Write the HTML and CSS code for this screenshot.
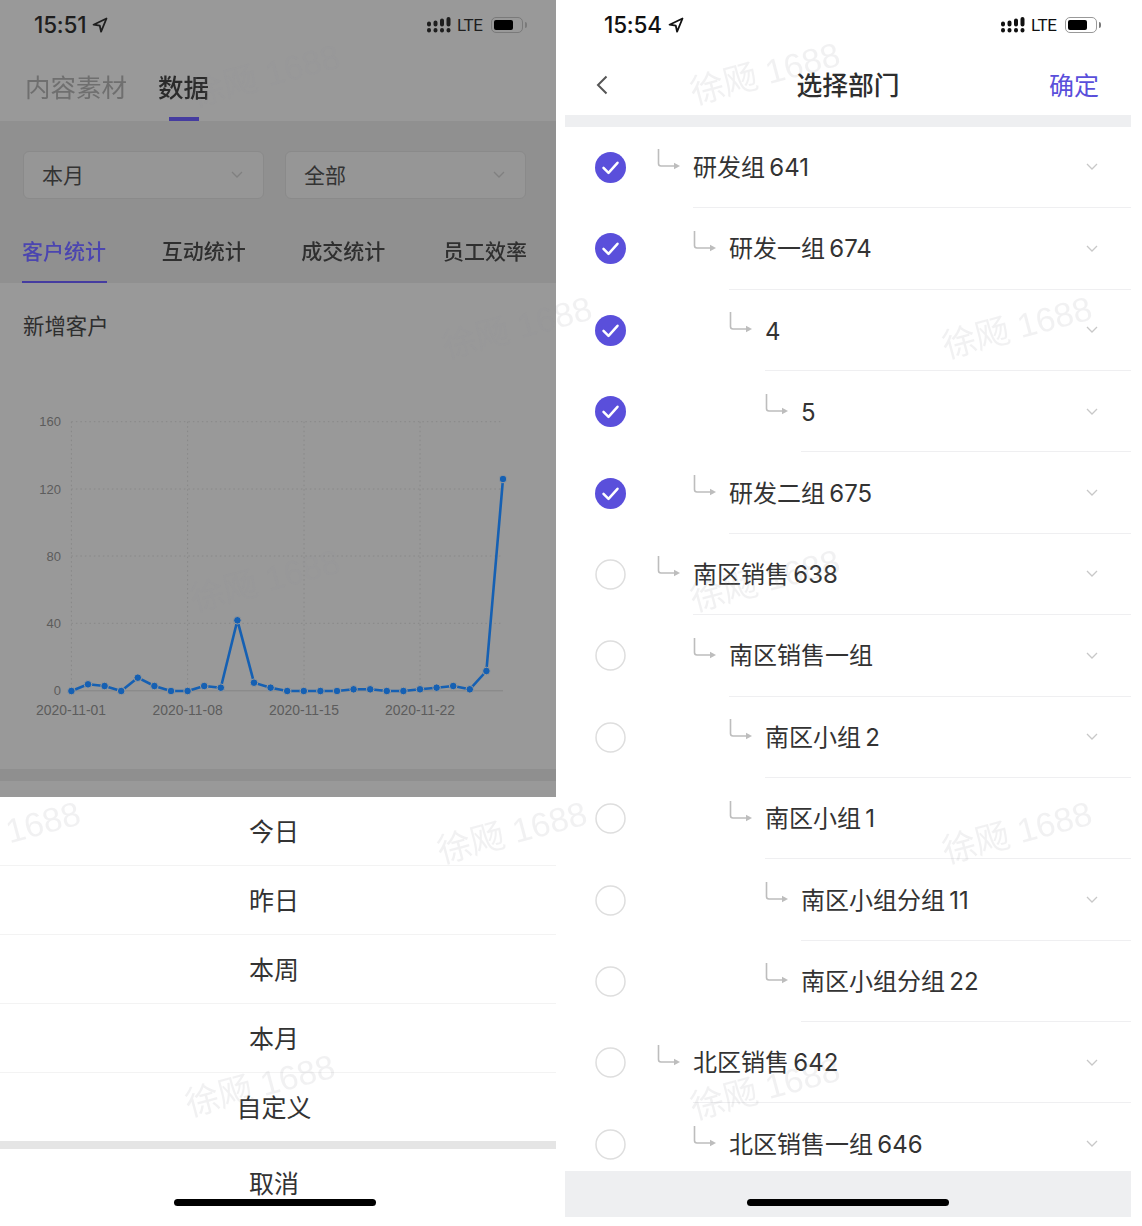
FILE: index.html
```html
<!DOCTYPE html>
<html lang="zh-CN">
<head>
<meta charset="utf-8">
<title>数据 / 选择部门</title>
<link rel="stylesheet" href="styles.css">
</head>
<body>
<svg class="defs" width="0" height="0" aria-hidden="true">
  <symbol id="elbow" viewBox="0 0 24 22">
    <path d="M1.500 1v14.500q0 2.500 2.500 2.500h14" fill="none" stroke="currentColor" stroke-width="1.600"/>
    <path d="M17 14.800l6 3.200-6 3.200z" fill="currentColor"/>
  </symbol>
  <symbol id="chev" viewBox="0 0 12 8">
    <path d="M1 1l5 5 5-5" fill="none" stroke="currentColor" stroke-width="1.300"/>
  </symbol>
  <symbol id="check" viewBox="0 0 31 31">
    <circle cx="15.500" cy="15.500" r="15.500" fill="#5a4fdb"/>
    <path d="M8.500 15.800l5 5 9-10" fill="none" stroke="#fff" stroke-width="2.500" stroke-linecap="round" stroke-linejoin="round"/>
  </symbol>
  <symbol id="radio" viewBox="0 0 31 31">
    <circle cx="15.500" cy="15.500" r="14.500" fill="none" stroke="#dedede" stroke-width="1.500"/>
  </symbol>
  <symbol id="arrow" viewBox="0 0 16 16">
    <path d="M14.500 1.500L1.500 7.700l6.300 1 1.300 6z" fill="none" stroke="currentColor" stroke-width="1.800" stroke-linejoin="round"/>
  </symbol>
  <symbol id="signal" viewBox="0 0 24 16">
    <path d="M2 6.500v1M8.500 5.500v2M15 3.500v4M21.500 2v5.500M2 13v.5M8.500 13v.5M15 13v.5M21.500 13v.5" fill="none" stroke="currentColor" stroke-width="4" stroke-linecap="round"/>
  </symbol>
</svg>

<main class="page">
  <section class="phone phone-left">
    <header class="status">
      <div class="time">15:51<svg class="loc"><use href="#arrow"/></svg></div>
      <div class="sys">
        <svg class="sig"><use href="#signal"/></svg>
        <span class="lte">LTE</span>
        <span class="batt"><span class="batt-fill"></span></span>
      </div>
    </header>
    <nav class="main-tabs">
      <span class="main-tab">内容素材</span>
      <span class="main-tab main-tab-on">数据</span>
    </nav>
    <div class="band">
      <div class="filters">
        <div class="select"><span>本月</span><svg class="sel-chev"><use href="#chev"/></svg></div>
        <div class="select"><span>全部</span><svg class="sel-chev"><use href="#chev"/></svg></div>
      </div>
      <div class="sub-tabs">
        <span class="sub-tab sub-tab-on">客户统计</span>
        <span class="sub-tab">互动统计</span>
        <span class="sub-tab">成交统计</span>
        <span class="sub-tab">员工效率</span>
      </div>
    </div>
    <div class="stats">
      <h2 class="stats-title">新增客户</h2>
      <svg class="chart" viewBox="0 400 556 330">
        <g class="grid">
          <path d="M71.400 421.700H503M71.400 489H503M71.400 556H503M71.400 623.300H503"/>
          <path d="M71.400 421.700V691M187.600 421.700V691M304 421.700V691M420 421.700V691"/>
        </g>
        <path class="base" d="M71.400 690.800H503"/>
        <g class="ylab">
          <text x="61" y="426">160</text>
          <text x="61" y="493.500">120</text>
          <text x="61" y="560.500">80</text>
          <text x="61" y="627.500">40</text>
          <text x="61" y="695">0</text>
        </g>
        <g class="xlab">
          <text x="71" y="715">2020-11-01</text>
          <text x="187.600" y="715">2020-11-08</text>
          <text x="304" y="715">2020-11-15</text>
          <text x="420" y="715">2020-11-22</text>
        </g>
        <polyline class="line" points="71.400,691 88,684.300 104.600,686 121.200,691 137.800,677.700 154.400,686 171,691 187.600,691 204.200,686 220.800,687.700 237.400,620.300 254,682.700 270.600,687.700 287.200,691 303.800,691 320.400,691 337,691 353.600,689.300 370.200,689.300 386.800,691 403.400,691 420,689.300 436.600,687.700 453.200,686 469.800,689.300 486.400,671 503,479"/>
        <g class="dots">
          <circle cx="71.400" cy="691"/><circle cx="88" cy="684.300"/><circle cx="104.600" cy="686"/>
          <circle cx="121.200" cy="691"/><circle cx="137.800" cy="677.700"/><circle cx="154.400" cy="686"/>
          <circle cx="171" cy="691"/><circle cx="187.600" cy="691"/><circle cx="204.200" cy="686"/>
          <circle cx="220.800" cy="687.700"/><circle cx="237.400" cy="620.300"/><circle cx="254" cy="682.700"/>
          <circle cx="270.600" cy="687.700"/><circle cx="287.200" cy="691"/><circle cx="303.800" cy="691"/>
          <circle cx="320.400" cy="691"/><circle cx="337" cy="691"/><circle cx="353.600" cy="689.300"/>
          <circle cx="370.200" cy="689.300"/><circle cx="386.800" cy="691"/><circle cx="403.400" cy="691"/>
          <circle cx="420" cy="689.300"/><circle cx="436.600" cy="687.700"/><circle cx="453.200" cy="686"/>
          <circle cx="469.800" cy="689.300"/><circle cx="486.400" cy="671"/><circle cx="503" cy="479"/>
        </g>
      </svg>
    </div>
    <div class="stats-band"></div>
    <div class="stats-gap"></div>
    <div class="sheet">
      <div class="sheet-item">今日</div>
      <div class="sheet-item">昨日</div>
      <div class="sheet-item">本周</div>
      <div class="sheet-item">本月</div>
      <div class="sheet-item">自定义</div>
      <div class="sheet-cancel">取消</div>
      <div class="home home-left"></div>
    </div>
  </section>

  <section class="phone phone-right">
    <header class="status status-right">
      <div class="time">15:54<svg class="loc"><use href="#arrow"/></svg></div>
      <div class="sys">
        <svg class="sig"><use href="#signal"/></svg>
        <span class="lte">LTE</span>
        <span class="batt"><span class="batt-fill"></span></span>
      </div>
    </header>
    <nav class="navbar">
      <svg class="back" viewBox="0 0 12 20"><path d="M10.500 1.500L2 10l8.500 8.500" fill="none" stroke="currentColor" stroke-width="2"/></svg>
      <h1 class="nav-title">选择部门</h1>
      <span class="nav-ok">确定</span>
    </nav>
    <div class="divider"></div>
    <div class="list">
      <div class="row l0"><svg class="tick"><use href="#check"/></svg><svg class="elbow"><use href="#elbow"/></svg><div class="row-main"><span>研发组 641</span><svg class="row-chev"><use href="#chev"/></svg></div></div>
      <div class="row l1"><svg class="tick"><use href="#check"/></svg><svg class="elbow"><use href="#elbow"/></svg><div class="row-main"><span>研发一组 674</span><svg class="row-chev"><use href="#chev"/></svg></div></div>
      <div class="row l2"><svg class="tick"><use href="#check"/></svg><svg class="elbow"><use href="#elbow"/></svg><div class="row-main"><span class="digit">4</span><svg class="row-chev"><use href="#chev"/></svg></div></div>
      <div class="row l3"><svg class="tick"><use href="#check"/></svg><svg class="elbow"><use href="#elbow"/></svg><div class="row-main"><span class="digit">5</span><svg class="row-chev"><use href="#chev"/></svg></div></div>
      <div class="row l1"><svg class="tick"><use href="#check"/></svg><svg class="elbow"><use href="#elbow"/></svg><div class="row-main"><span>研发二组 675</span><svg class="row-chev"><use href="#chev"/></svg></div></div>
      <div class="row l0"><svg class="tick"><use href="#radio"/></svg><svg class="elbow"><use href="#elbow"/></svg><div class="row-main"><span>南区销售 638</span><svg class="row-chev"><use href="#chev"/></svg></div></div>
      <div class="row l1"><svg class="tick"><use href="#radio"/></svg><svg class="elbow"><use href="#elbow"/></svg><div class="row-main"><span>南区销售一组</span><svg class="row-chev"><use href="#chev"/></svg></div></div>
      <div class="row l2"><svg class="tick"><use href="#radio"/></svg><svg class="elbow"><use href="#elbow"/></svg><div class="row-main"><span>南区小组 2</span><svg class="row-chev"><use href="#chev"/></svg></div></div>
      <div class="row l2"><svg class="tick"><use href="#radio"/></svg><svg class="elbow"><use href="#elbow"/></svg><div class="row-main"><span>南区小组 1</span></div></div>
      <div class="row l3"><svg class="tick"><use href="#radio"/></svg><svg class="elbow"><use href="#elbow"/></svg><div class="row-main"><span>南区小组分组 11</span><svg class="row-chev"><use href="#chev"/></svg></div></div>
      <div class="row l3"><svg class="tick"><use href="#radio"/></svg><svg class="elbow"><use href="#elbow"/></svg><div class="row-main"><span>南区小组分组 22</span></div></div>
      <div class="row l0"><svg class="tick"><use href="#radio"/></svg><svg class="elbow"><use href="#elbow"/></svg><div class="row-main"><span>北区销售 642</span><svg class="row-chev"><use href="#chev"/></svg></div></div>
      <div class="row l1"><svg class="tick"><use href="#radio"/></svg><svg class="elbow"><use href="#elbow"/></svg><div class="row-main"><span>北区销售一组 646</span><svg class="row-chev"><use href="#chev"/></svg></div></div>
    </div>
    <footer class="foot"><div class="home"></div></footer>
  </section>

  <div class="marks" aria-hidden="true">
    <span class="wm wm-a">徐飏 1688</span>
    <span class="wm wm-b">徐飏 1688</span>
    <span class="wm wm-c">徐飏 1688</span>
    <span class="wm wm-d">徐飏 1688</span>
    <span class="wm wm-e">徐飏 1688</span>
    <span class="wm wm-f">徐飏 1688</span>
    <span class="wm wm-g">1688</span>
    <span class="wm wm-h">徐飏 1688</span>
    <span class="wm wm-i">徐飏 1688</span>
    <span class="wm wm-j">徐飏 1688</span>
    <span class="wm wm-k">徐飏 1688</span>
  </div>
</main>
</body>
</html>
```
FILE: styles.css
```css
* { box-sizing: border-box; }
html, body { margin: 0; padding: 0; background: #fff; }
body {
  width: 1142px;
  height: 1226px;
  overflow: hidden;
  font-family: Inter, "Noto Sans CJK SC", sans-serif;
  color: #333;
}
.defs { position: absolute; }
.page {
  position: relative;
  display: flex;
  gap: 9px;
  width: 1142px;
  height: 1226px;
  overflow: hidden;
  filter: blur(0.4px);
}
.phone { display: flex; flex-direction: column; }
.phone-left { width: 556px; height: 1226px; background: #999; }
.phone-right { width: 566px; height: 1217px; background: #fff; }

/* status bar */
.status {
  flex: none;
  height: 52px;
  display: flex;
  justify-content: space-between;
  align-items: center;
  padding: 0 33px 2px 34px;
  color: #1e1e1e;
}
.status-right { padding: 0 34px 2px 39px; color: #111; }
.time {
  display: flex;
  align-items: center;
  gap: 6px;
  font: 500 22.500px/26px Inter, Roboto, sans-serif;
  letter-spacing: -0.200px;
}
.loc { width: 16px; height: 16px; }
.sys { display: flex; align-items: center; }
.sig { width: 24px; height: 16px; }
.lte {
  margin-left: 6px;
  width: 26px;
  font: 400 17px/20px Roboto, sans-serif;
  letter-spacing: -0.400px;
  white-space: nowrap;
}
.batt {
  position: relative;
  margin-left: 8px;
  width: 32px;
  height: 16px;
  border: 1.500px solid #7a7a7a;
  border-radius: 5px;
  padding: 2px;
}
.phone-right .batt { border-color: #999; }
.batt::after {
  content: "";
  position: absolute;
  right: -5px;
  top: 3.500px;
  width: 2px;
  height: 6px;
  border-radius: 0 2px 2px 0;
  background: #7a7a7a;
}
.batt-fill {
  display: block;
  width: 19px;
  height: 100%;
  border-radius: 2px;
  background: #000;
}

/* left: top tabs */
.main-tabs {
  flex: none;
  height: 69px;
  display: flex;
  gap: 31px;
  padding-left: 25px;
}
.main-tab {
  position: relative;
  padding-top: 19px;
  font-size: 25.500px;
  line-height: 34px;
  color: #6f6f6f;
}
.main-tab-on { color: #2a2a2a; font-weight: 500; }
.main-tab-on::after {
  content: "";
  position: absolute;
  left: 11px;
  bottom: 0;
  width: 30px;
  height: 4px;
  background: #453ca0;
}

/* left: filter band */
.band {
  flex: none;
  height: 162px;
  background: #909090;
  padding-top: 30px;
}
.filters { display: flex; gap: 21px; padding: 0 30px 0 23px; }
.select {
  flex: 1;
  height: 48px;
  display: flex;
  align-items: center;
  justify-content: space-between;
  padding: 0 20px 3px 18px;
  background: #969696;
  border: 1px solid #8a8a8a;
  border-radius: 6px;
  font-size: 21px;
  color: #333;
}
.sel-chev { width: 12px; height: 8px; color: #808080; margin-top: 3px; }
.sub-tabs {
  display: flex;
  justify-content: space-between;
  padding: 0 29px 0 22px;
}
.sub-tab {
  position: relative;
  height: 84px;
  padding-top: 39px;
  font-size: 21px;
  line-height: 28px;
  font-weight: 500;
  color: #2f2f2f;
}
.sub-tab:nth-child(2), .sub-tab:nth-child(3) { margin-left: -2px; }
.sub-tab-on { color: #4b45b0; }
.sub-tab-on::after {
  content: "";
  position: absolute;
  left: 0;
  right: -1px;
  bottom: 0;
  height: 2px;
  background: #453ca0;
}

/* left: chart */
.stats {
  flex: none;
  height: 486px;
  padding-top: 30px;
}
.stats-title {
  margin: 0 0 0 23px;
  font-size: 21.400px;
  line-height: 27px;
  font-weight: 400;
  color: #2e2e2e;
}
.chart { display: block; width: 556px; height: 330px; margin-top: 60px; }
.grid path { fill: none; stroke: #888; stroke-width: 1; stroke-dasharray: 1.500 3; }
.base { fill: none; stroke: #858585; stroke-width: 1; }
.ylab text, .xlab text {
  font: 13px "Liberation Sans", sans-serif;
  fill: #5c5c5c;
}
.ylab text { text-anchor: end; }
.xlab text { text-anchor: middle; font-size: 13.900px; }
.line { fill: none; stroke: #1560b3; stroke-width: 2.600; stroke-linejoin: round; }
.dots circle { r: 3.800px; fill: #1560b3; stroke: #999; stroke-width: 1; }

.stats-band { flex: none; height: 12px; background: #8f8f8f; }
.stats-gap { flex: none; height: 16px; }

/* left: action sheet */
.sheet { flex: 1; position: relative; background: #fff; }
.sheet-item {
  height: 69px;
  display: flex;
  align-items: center;
  justify-content: center;
  padding: 0 8px 3px 0;
  border-bottom: 1px solid #f3f3f3;
  font-size: 25px;
  color: #333;
}
.sheet-item:nth-child(5) { height: 68px; border-bottom: 0; }
.sheet-cancel {
  border-top: 8px solid #e5e5e5;
  padding: 18px 8px 0 0;
  text-align: center;
  font-size: 25px;
  line-height: 34px;
  color: #333;
}
.home {
  width: 202px;
  height: 7px;
  border-radius: 4px;
  background: #000;
}
.home-left { position: absolute; left: 174px; top: 402px; }

/* right: nav */
.navbar {
  flex: none;
  height: 63px;
  display: flex;
  align-items: center;
  justify-content: space-between;
  padding: 4px 32px 0 31px;
  position: relative;
}
.back { width: 12px; height: 20px; color: #555; margin-bottom: 2px; }
.nav-title {
  position: absolute;
  left: 0;
  right: 0;
  margin: 0;
  text-align: center;
  font-size: 25.800px;
  line-height: 34px;
  font-weight: 500;
  color: #2e2e2e;
}
.nav-ok { font-size: 25px; line-height: 34px; color: #5a4fdb; }
.divider { flex: none; height: 11.800px; background: #eeeff1; }

/* right: tree list */
.list { flex: 1; min-height: 0; overflow: hidden; }
.row {
  height: 81.400px;
  display: flex;
  align-items: center;
  padding-left: 30px;
  color: #bdbdbd;
}
.tick { flex: none; width: 31px; height: 31px; }
.elbow { flex: none; width: 24px; height: 22px; margin-bottom: 16px; margin-right: 12px; }
.l0 .elbow { margin-left: 31px; }
.l1 .elbow { margin-left: 67px; }
.l2 .elbow { margin-left: 103px; }
.l3 .elbow { margin-left: 139px; }
.row-main {
  flex: 1;
  height: 100%;
  display: flex;
  align-items: center;
  justify-content: space-between;
  padding: 0 33px 3px 0;
  border-bottom: 1px solid #efeff1;
  font-size: 24px;
  word-spacing: -2.500px;
  color: #333;
}
.digit { padding-top: 6px; }
.row-chev { width: 12px; height: 8px; color: #c8c8c8; margin-top: 4px; }

.foot {
  flex: none;
  height: 46px;
  background: #eeeff1;
  display: flex;
  justify-content: center;
  padding-top: 28px;
}

/* watermark layer */
.marks { position: absolute; inset: 0; pointer-events: none; }
.wm {
  position: absolute;
  width: 170px;
  text-align: center;
  transform: rotate(-15deg);
  font: 34px/40px "Liberation Sans", "Noto Sans CJK SC", sans-serif;
  color: rgba(150, 150, 156, 0.13);
  white-space: nowrap;
}
.wm-a { left: 180px; top: 55px; }
.wm-b { left: 680px; top: 53px; }
.wm-c { left: 432px; top: 307px; }
.wm-d { left: 932px; top: 307px; }
.wm-e { left: 180px; top: 560px; }
.wm-f { left: 680px; top: 560px; }
.wm-g { left: 5px; top: 802px; width: 76px; }
.wm-h { left: 427px; top: 812px; }
.wm-i { left: 932px; top: 812px; }
.wm-j { left: 175px; top: 1065px; }
.wm-k { left: 680px; top: 1068px; }
```
